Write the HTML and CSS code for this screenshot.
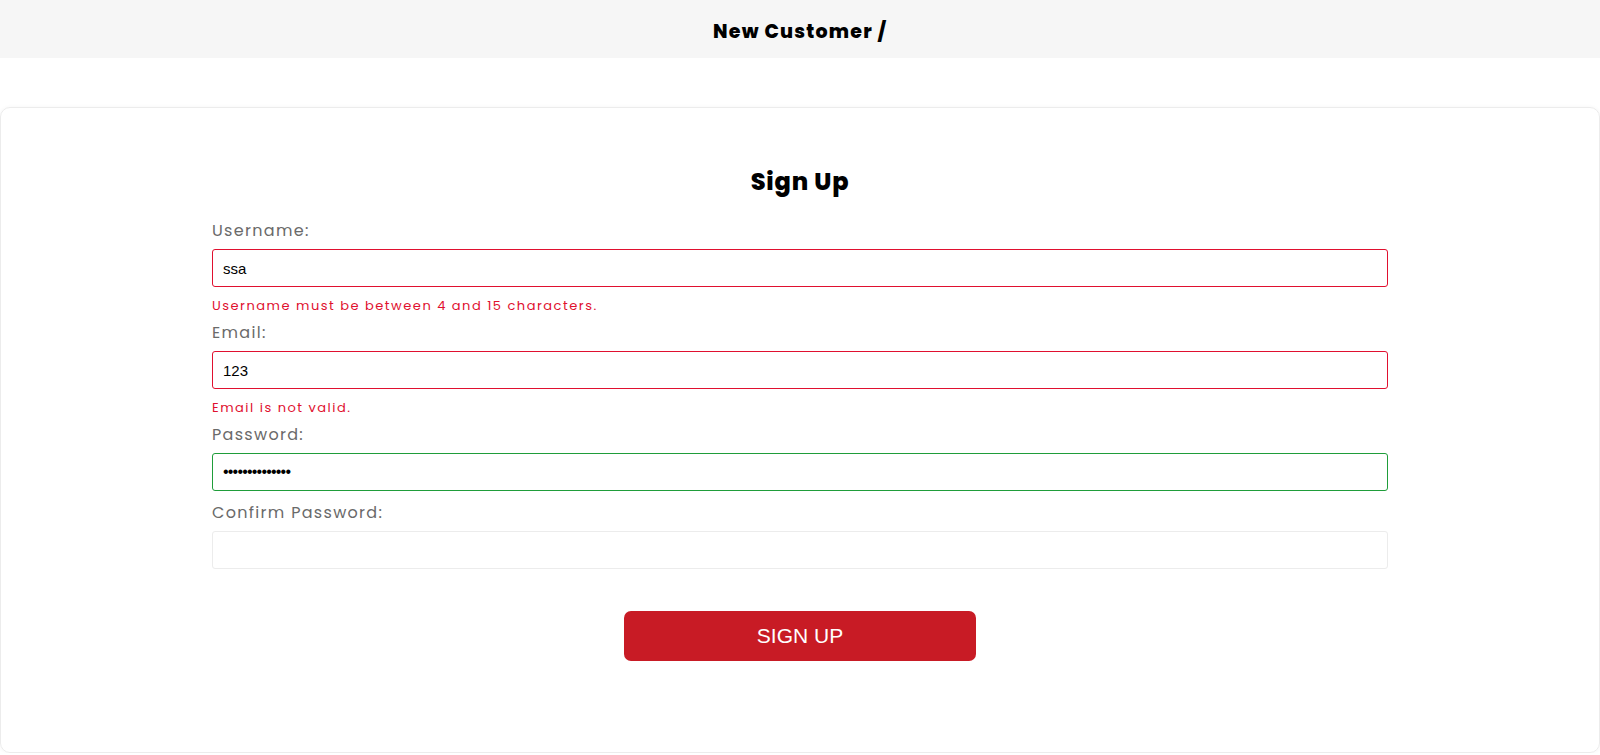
FILE: index.html
```html
<!DOCTYPE html>
<html lang="en">
<head>
<meta charset="utf-8">
<title>Sign Up</title>
<link rel="stylesheet" href="styles.css">
</head>
<body>
<header class="topbar">
  <h1 class="crumb">New Customer /</h1>
</header>
<main class="card">
  <form class="signup">
    <h2 class="title">Sign Up</h2>
    <div class="group has-error">
      <label class="label" for="username">Username:</label>
      <input class="field invalid" id="username" type="text" value="ssa">
      <div class="error">Username must be between 4 and 15 characters.</div>
    </div>
    <div class="group has-error">
      <label class="label" for="email">Email:</label>
      <input class="field invalid" id="email" type="text" value="123">
      <div class="error">Email is not valid.</div>
    </div>
    <div class="group">
      <label class="label" for="password">Password:</label>
      <input class="field valid secret" id="password" type="password" value="abcdefghijklmn">
    </div>
    <div class="group">
      <label class="label" for="confirm">Confirm Password:</label>
      <input class="field" id="confirm" type="password" value="">
    </div>
    <div class="actions">
      <button class="submit" type="button">SIGN UP</button>
    </div>
  </form>
</main>
</body>
</html>
```

FILE: styles.css
```css
* { box-sizing: border-box; }

html, body {
  margin: 0;
  padding: 0;
  background: #ffffff;
}

body {
  font-family: "Poppins", "Open Sans", "DejaVu Sans", sans-serif;
  color: #000;
}

.topbar {
  height: 58px;
  background: #f6f6f6;
  display: flex;
  align-items: center;
  justify-content: center;
}

.crumb {
  margin: 0;
  padding-top: 5px;
  font-size: 19px;
  font-weight: 800;
  letter-spacing: 1.2px;
  color: #000;
}

.card {
  margin-top: 49px;
  height: 646px;
  border: 1px solid #ececec;
  border-radius: 10px;
  box-shadow: 0 0 4px rgba(0, 0, 0, 0.04);
  padding-top: 59px;
}

.signup {
  width: 1176px;
  margin: 0 auto;
}

.title {
  margin: 0 0 22px;
  text-align: center;
  font-size: 24px;
  line-height: 30px;
  font-weight: 800;
  letter-spacing: 0.8px;
}

.group {
  margin-bottom: 10px;
}

.group.has-error {
  margin-bottom: 7px;
}

.label {
  display: block;
  font-size: 16px;
  line-height: 24px;
  margin-bottom: 6px;
  color: #6a6a6a;
  letter-spacing: 1.3px;
}

.field {
  display: block;
  width: 100%;
  height: 38px;
  padding: 0 10px;
  border: 1px solid #ececec;
  border-radius: 3px;
  font-family: "Liberation Sans", Arial, sans-serif;
  font-size: 15px;
  color: #000;
  background: #fff;
  outline: none;
}

.field.invalid {
  border-color: #e0102f;
}

.field.valid {
  border-color: #1f9d3a;
}

.field.secret {
  font-size: 16px;
  letter-spacing: -0.8px;
}

.error {
  margin-top: 10px;
  font-size: 13px;
  line-height: 17px;
  letter-spacing: 1.5px;
  color: #e0102f;
}

.actions {
  display: flex;
  justify-content: center;
  margin-top: 42px;
}

.submit {
  width: 352px;
  height: 50px;
  border: none;
  border-radius: 7px;
  background: #c81b25;
  color: #fff;
  font-family: "Liberation Sans", Arial, sans-serif;
  font-size: 21px;
  cursor: pointer;
}
```
